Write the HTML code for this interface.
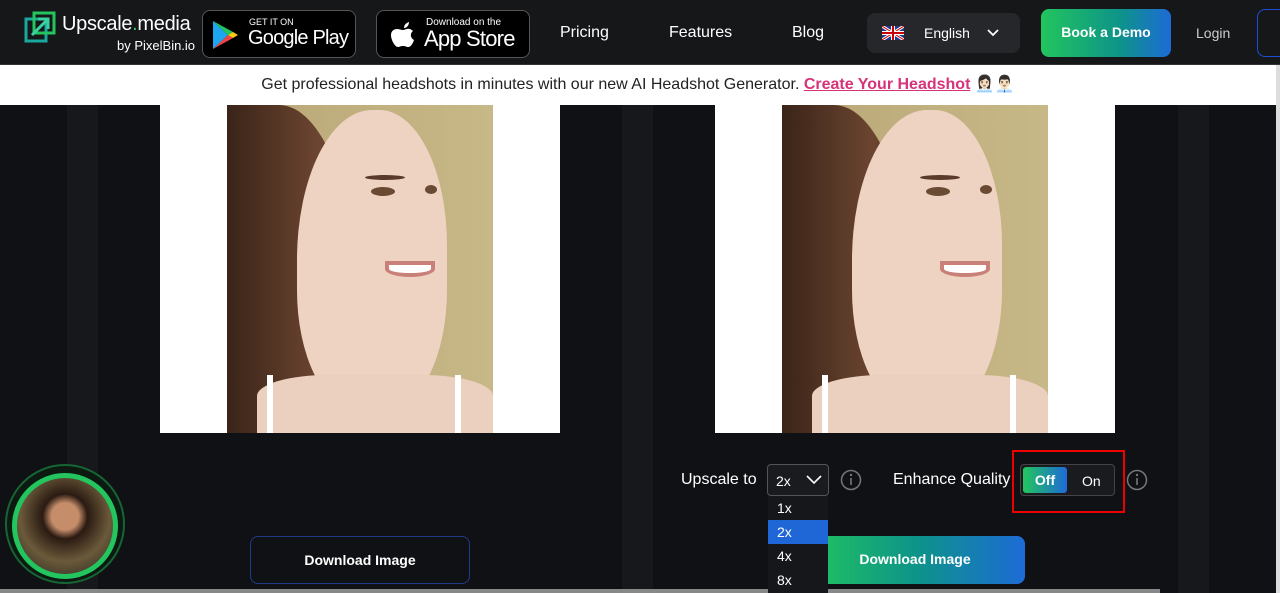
<!DOCTYPE html>
<html><head><meta charset="utf-8"><style>
*{margin:0;padding:0;box-sizing:border-box}
body{width:1280px;height:593px;overflow:hidden;background:#101114;font-family:"Liberation Sans",sans-serif;position:relative;color:#fff}
.abs{position:absolute;white-space:nowrap}
.stripe{position:absolute;top:105px;bottom:0;width:31px;background:#17181b}
.nav{top:0;left:0;width:1280px;height:65px;background:#161719;border-bottom:1px solid #333}
.store{background:#000;border:1px solid #555;border-radius:8px;height:48px;top:10px}
.banner{top:65px;left:0;width:1276px;height:40px;background:#fff;color:#222;font-size:16px;text-align:center;line-height:40px}
.white{background:#fff;top:105px;height:328px;width:400px}
.photo{top:105px;height:328px;width:266px;background:linear-gradient(90deg,#b9a676,#c7b888);overflow:hidden}
.photo .hair{position:absolute;left:0;top:0;width:130px;height:328px;background:linear-gradient(90deg,#3a2418,#6b4530 70%,#5a3a28);border-radius:0 60% 0 0}
.photo .face{position:absolute;left:70px;top:5px;width:150px;height:300px;background:#efd3c2;border-radius:50% 45% 40% 40%}
.photo .neck{position:absolute;left:30px;top:270px;width:236px;height:70px;background:#ecd0bf;border-radius:30% 30% 0 0}
.photo .strap{position:absolute;top:270px;width:6px;height:60px;background:#fff}
.photo .eye{position:absolute;width:24px;height:9px;background:#6b4a33;border-radius:50%}
.photo .brow{position:absolute;width:40px;height:5px;background:#5a3a28;border-radius:50%}
.photo .smile{position:absolute;left:158px;top:156px;width:50px;height:16px;background:#fff;border-radius:0 0 50% 50%;border:4px solid #c98079}
.btn{border-radius:8px;height:48px;font-weight:bold;font-size:14px;text-align:center;line-height:46px}
</style></head><body>
<div class="stripe" style="left:67px"></div>
<div class="stripe" style="left:622px"></div>
<div class="stripe" style="left:1178px"></div>
<div class="abs" style="left:1276px;top:0;width:4px;height:593px;background:#ddd"></div>
<div class="abs" style="left:0;top:589px;width:1160px;height:4px;background:#888"></div>

<div class="abs nav">
 <svg class="abs" style="left:24px;top:11px" width="32" height="32" viewBox="0 0 32 32"><rect x="2" y="8" width="20" height="22" fill="none" stroke="#1aa7a0" stroke-width="3"/><rect x="10" y="2" width="20" height="20" fill="none" stroke="#22c55e" stroke-width="3"/><path d="M8 24 L24 8 M14 8 H24 V18" stroke="#3ad0a0" stroke-width="3" fill="none"/></svg>
 <div class="abs" style="left:62px;top:13px;font-size:20px;letter-spacing:-0.3px">Upscale<span style="color:#22c55e">.</span>media</div>
 <div class="abs" style="left:117px;top:38px;font-size:13px">by PixelBin.io</div>
 <div class="abs store" style="left:202px;width:154px">
  <svg class="abs" style="left:8px;top:9px" width="28" height="30" viewBox="0 0 28 30"><path d="M2 1 L17 15 L2 29Z" fill="#1ea7f0"/><path d="M2 1 L22 12 L17 15Z" fill="#22c55e"/><path d="M2 29 L22 18 L17 15Z" fill="#ef4444"/><path d="M22 12 L27 15 L22 18 L17 15Z" fill="#facc15"/></svg>
  <div class="abs" style="left:46px;top:6px;font-size:9px">GET IT ON</div>
  <div class="abs" style="left:45px;top:16px;font-size:20px;letter-spacing:-0.8px">Google Play</div>
 </div>
 <div class="abs store" style="left:376px;width:154px">
  <svg class="abs" style="left:13px;top:10px" width="26" height="30" viewBox="0 0 26 30"><path d="M13 9c2-0 4-2 7-1 2 1 3 2 3 2-3 2-3 7 1 9-1 3-3 7-6 7-2 0-2-1-5-1s-3 1-5 1c-3 0-7-7-7-12 0-4 3-6 6-6 2 0 4 1 6 1z M14 7c0-3 2-5 5-6 0 3-2 6-5 6z" fill="#fff"/></svg>
  <div class="abs" style="left:49px;top:6px;font-size:10px">Download on the</div>
  <div class="abs" style="left:47px;top:15px;font-size:22px;letter-spacing:-0.8px">App Store</div>
 </div>
 <div class="abs" style="left:560px;top:24px;font-size:16px">Pricing</div>
 <div class="abs" style="left:669px;top:24px;font-size:16px">Features</div>
 <div class="abs" style="left:792px;top:24px;font-size:16px">Blog</div>
 <div class="abs" style="left:867px;top:13px;width:153px;height:40px;background:#26272b;border-radius:8px">
  <svg class="abs" style="left:15px;top:13px" width="22" height="14" viewBox="0 0 22 14"><rect width="22" height="14" fill="#1e3a8a"/><path d="M0 0L22 14M22 0L0 14" stroke="#fff" stroke-width="3"/><path d="M0 0L22 14M22 0L0 14" stroke="#c00" stroke-width="1"/><path d="M11 0V14M0 7H22" stroke="#fff" stroke-width="4"/><path d="M11 0V14M0 7H22" stroke="#c00" stroke-width="2"/></svg>
  <div class="abs" style="left:57px;top:12px;font-size:14px">English</div>
  <svg class="abs" style="left:120px;top:15px" width="12" height="10"><path d="M1 2 L6 7 L11 2" stroke="#fff" stroke-width="1.8" fill="none"/></svg>
 </div>
 <div class="abs btn" style="left:1041px;top:9px;width:130px;background:linear-gradient(90deg,#22c55e,#0d9488 60%,#1d6bd6)">Book a Demo</div>
 <div class="abs" style="left:1196px;top:25px;font-size:14px;color:#ccc">Login</div>
 <div class="abs" style="left:1257px;top:9px;width:30px;height:48px;border:1px solid #1d4ed8;border-radius:8px"></div>
</div>

<div class="abs banner">Get professional headshots in minutes with our new AI Headshot Generator. <b style="color:#d6337a;text-decoration:underline">Create Your Headshot</b> 👩🏻‍💼👨🏻‍💼</div>

<div class="abs white" style="left:160px"></div>
<div class="abs white" style="left:715px"></div>
<div class="abs photo" style="left:227px"><div class="hair"></div><div class="face"></div><div class="neck"></div><div class="strap" style="left:40px"></div><div class="strap" style="left:228px"></div><div class="brow" style="left:138px;top:70px"></div><div class="eye" style="left:144px;top:82px"></div><div class="eye" style="left:198px;top:80px;width:12px"></div><div class="smile"></div></div>
<div class="abs photo" style="left:782px"><div class="hair"></div><div class="face"></div><div class="neck"></div><div class="strap" style="left:40px"></div><div class="strap" style="left:228px"></div><div class="brow" style="left:138px;top:70px"></div><div class="eye" style="left:144px;top:82px"></div><div class="eye" style="left:198px;top:80px;width:12px"></div><div class="smile"></div></div>

<div class="abs" style="left:5px;top:464px;width:120px;height:120px;border-radius:50%;border:2px solid #166534;background:#0c1a12"></div>
<div class="abs" style="left:12px;top:473px;width:106px;height:106px;border-radius:50%;border:5px solid #22c55e;background:radial-gradient(circle at 50% 40%,#c58d6a 18%,#2a1a12 30%,#6b5a3a 60%,#222 100%)"></div>

<div class="abs btn" style="left:250px;top:536px;width:220px;border:1px solid #1e3a8a;font-size:14px">Download Image</div>

<div class="abs" style="left:681px;top:471px;font-size:16px">Upscale to</div>
<div class="abs" style="left:767px;top:464px;width:62px;height:32px;border:1px solid #555;border-radius:4px;background:#1a1b1e">
 <div class="abs" style="left:8px;top:8px;font-size:14px">2x</div>
 <svg class="abs" style="left:38px;top:9px" width="16" height="12"><path d="M1 2 L8 9 L15 2" stroke="#fff" stroke-width="1.6" fill="none"/></svg>
</div>
<svg class="abs" style="left:840px;top:469px" width="22" height="22"><circle cx="11" cy="11" r="9.5" stroke="#777" stroke-width="1.5" fill="none"/><path d="M11 9v7" stroke="#777" stroke-width="1.6"/><circle cx="11" cy="6" r="1.2" fill="#777"/></svg>
<div class="abs btn" style="left:805px;top:536px;width:220px;background:linear-gradient(90deg,#22c55e,#0d9488 50%,#1d6bd6)">Download Image</div>
<div class="abs" style="left:768px;top:496px;width:60px;height:97px;background:#16171a;font-size:14px">
 <div style="height:24px;line-height:24px;padding-left:9px">1x</div>
 <div style="height:24px;line-height:24px;padding-left:9px;background:#1f66d6">2x</div>
 <div style="height:24px;line-height:24px;padding-left:9px">4x</div>
 <div style="height:24px;line-height:24px;padding-left:9px">8x</div>
</div>
<div class="abs" style="left:893px;top:471px;font-size:16px">Enhance Quality</div>
<div class="abs" style="left:1012px;top:450px;width:113px;height:63px;border:2px solid #e00"></div>
<div class="abs" style="left:1020px;top:464px;width:95px;height:32px;border:1px solid #444;border-radius:4px;background:#1a1b1e">
 <div class="abs" style="left:2px;top:2px;width:44px;height:26px;border-radius:3px;background:linear-gradient(90deg,#22c55e,#1d6bd6);font-weight:bold;font-size:14px;text-align:center;line-height:26px">Off</div>
 <div class="abs" style="left:61px;top:8px;font-size:14px">On</div>
</div>
<svg class="abs" style="left:1126px;top:469px" width="22" height="22"><circle cx="11" cy="11" r="9.5" stroke="#777" stroke-width="1.5" fill="none"/><path d="M11 9v7" stroke="#777" stroke-width="1.6"/><circle cx="11" cy="6" r="1.2" fill="#777"/></svg>
</body></html>
